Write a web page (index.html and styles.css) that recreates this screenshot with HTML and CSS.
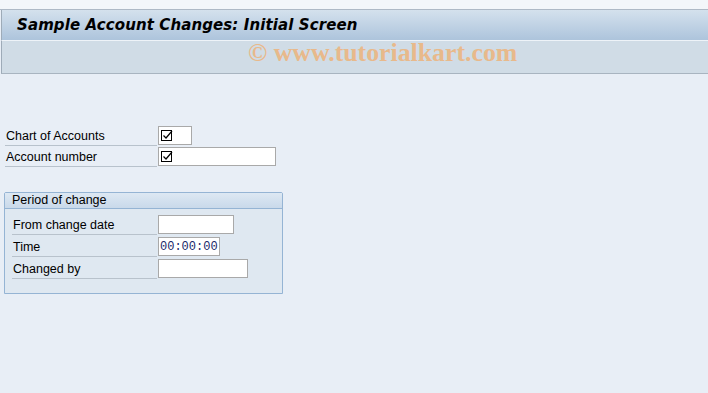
FILE: index.html
```html
<!DOCTYPE html>
<html lang="en">
<head>
    <meta charset="UTF-8">
    <title>Sample Account Changes: Initial Screen</title>
    <link rel="stylesheet" href="styles.css">
</head>
<body>
    <div class="top-strip"></div>
    <div class="title-bar">
        <h1>Sample Account Changes: Initial Screen</h1>
    </div>
    <div class="tool-bar">
        <span class="watermark">&copy; www.tutorialkart.com</span>
    </div>

    <div class="screen">
        <!-- selection fields -->
        <div class="row">
            <label class="label">Chart of Accounts</label>
            <div class="field w-chart"><svg class="req" viewBox="0 0 12 11"><rect x="0.5" y="0.5" width="10" height="10" fill="none" stroke="#000"/><path d="M2.5 5.5 L5 8 L11 1" fill="none" stroke="#000" stroke-width="1.2"/></svg></div>
        </div>
        <div class="row">
            <label class="label">Account number</label>
            <div class="field w-account"><svg class="req" viewBox="0 0 12 11"><rect x="0.5" y="0.5" width="10" height="10" fill="none" stroke="#000"/><path d="M2.5 5.5 L5 8 L11 1" fill="none" stroke="#000" stroke-width="1.2"/></svg></div>
        </div>

        <!-- Period of change group -->
        <div class="group">
            <div class="group-head">Period of change</div>
            <div class="group-body">
                <div class="row">
                    <label class="label">From change date</label>
                    <div class="field w-date"></div>
                </div>
                <div class="row">
                    <label class="label">Time</label>
                    <div class="field w-time mono">00:00:00</div>
                </div>
                <div class="row">
                    <label class="label">Changed by</label>
                    <div class="field w-user"></div>
                </div>
            </div>
        </div>
    </div>
</body>
</html>
```

FILE: styles.css
```css
body {
    margin: 0;
    background-color: #e8eef6;
    font-family: 'Liberation Sans', Arial, sans-serif;
    font-size: 12.5px;
    color: #000;
}
.top-strip {
    height: 9px;
    background-color: #f3f6fa;
    border-bottom: 1px solid #aeb9c6;
}
.title-bar {
    height: 30px;
    margin-left: 1px;
    border-left: 1px solid #9eabb8;
    background: linear-gradient(#d4e1ed, #adc4dc);
    display: flex;
    align-items: center;
}
.title-bar h1 {
    margin: 0 0 0 15px;
    font-family: 'DejaVu Sans', Verdana, sans-serif;
    font-size: 15px;
    font-weight: bold;
    font-style: italic;
    letter-spacing: 0.1px;
}
.tool-bar {
    height: 32px;
    margin-left: 1px;
    border-left: 1px solid #9eabb8;
    border-top: 1px solid #eef3f8;
    border-bottom: 1px solid #a8b4c0;
    background-color: #d0dce6;
    padding-left: 246px;
}
.watermark {
    font-family: 'Liberation Serif', 'Times New Roman', serif;
    font-weight: bold;
    font-size: 25.8px;
    line-height: 23px;
    color: #e8b98b;
}
.screen {
    padding: 51px 0 0 5px;
}
.row {
    display: flex;
    align-items: flex-end;
    height: 21px;
}
.label {
    width: 151px;
    padding-left: 1px;
    padding-bottom: 1px;
    border-bottom: 1px solid #b8c2cc;
    line-height: 16px;
}
.field {
    height: 17px;
    margin-left: 1px;
    margin-bottom: 1px;
    background-color: #fff;
    border: 1px solid #a9a9a9;
    box-sizing: content-box;
    display: flex;
    align-items: center;
}
.req {
    width: 12px;
    height: 11px;
    margin-left: 2px;
}
.w-chart { width: 32px; }
.w-account { width: 116px; }
.w-date { width: 74px; }
.w-time { width: 59px; }
.w-user { width: 88px; }
.mono {
    font-family: 'Liberation Mono', 'Courier New', monospace;
    font-size: 12px;
    color: #1a2a6a;
    padding-left: 1px;
}
.group {
    width: 277px;
    margin: 25px 0 0 -1px;
    border: 1px solid #95b4d4;
    border-radius: 2px 2px 0 0;
    background-color: #dfe8f1;
}
.group-head {
    height: 15px;
    line-height: 15px;
    padding-left: 7px;
    border-bottom: 1px solid #95b4d4;
    background: linear-gradient(#dde8f3, #c9d9ea);
}
.group-body {
    padding: 4px 0 14px 7px;
}
.group-body .row {
    height: 22px;
}
.group-body .label {
    width: 144px;
    padding-left: 1px;
}
```
